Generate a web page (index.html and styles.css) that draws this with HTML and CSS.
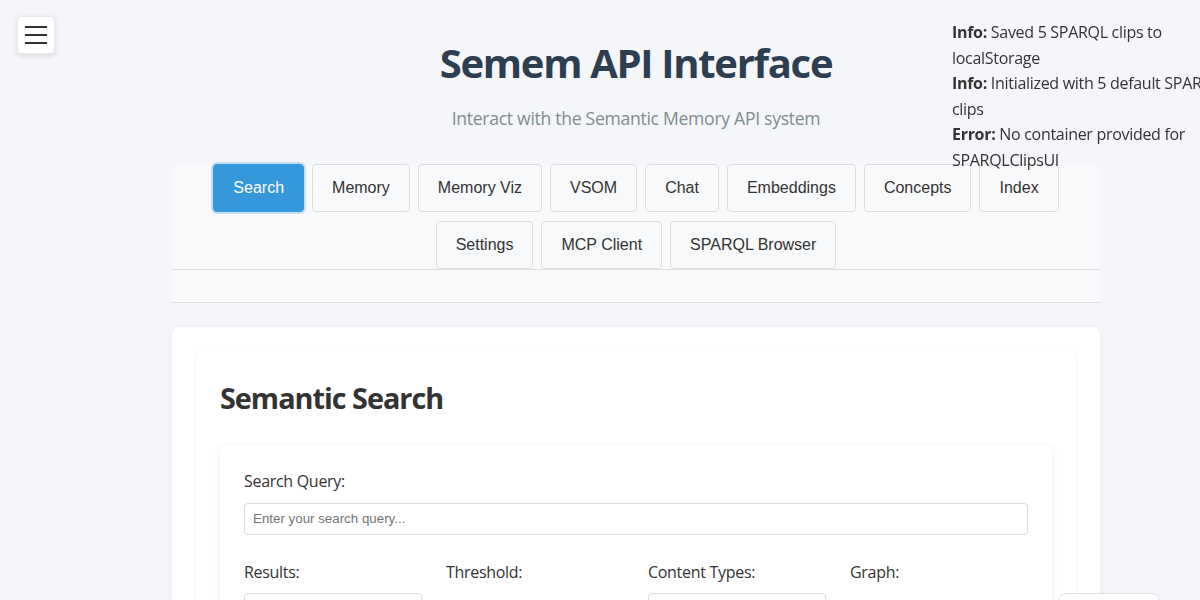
FILE: index.html
```html
<!DOCTYPE html>
<html lang="en">
<head>
<meta charset="utf-8">
<title>Semem API Interface</title>
<link rel="stylesheet" href="styles.css">
</head>
<body>
<button class="menu-toggle" aria-label="Menu">
  <span class="bar"></span><span class="bar"></span><span class="bar"></span>
</button>

<div class="log">
  <div><strong>Info:</strong> Saved 5 SPARQL clips to localStorage</div>
  <div><strong>Info:</strong> Initialized with 5 default SPARQL clips</div>
  <div><strong>Error:</strong> No container provided for SPARQLClipsUI</div>
</div>

<main class="main">
  <div class="container">
    <header class="header">
      <h1 class="title">Semem API Interface</h1>
      <p class="subtitle">Interact with the Semantic Memory API system</p>
    </header>

    <nav class="tabs">
      <button class="tab active">Search</button>
      <button class="tab">Memory</button>
      <button class="tab">Memory Viz</button>
      <button class="tab">VSOM</button>
      <button class="tab">Chat</button>
      <button class="tab">Embeddings</button>
      <button class="tab">Concepts</button>
      <button class="tab">Index</button>
      <button class="tab">Settings</button>
      <button class="tab">MCP Client</button>
      <button class="tab">SPARQL Browser</button>
    </nav>
    <div class="subtabs"></div>

    <section class="card">
      <div class="panel">
        <h2 class="panel-title">Semantic Search</h2>
        <form class="form-card">
          <div class="field">
            <label class="label">Search Query:</label>
            <input class="input" type="text" placeholder="Enter your search query...">
          </div>
          <div class="form-row">
            <div class="field">
              <label class="label">Results:</label>
              <div class="select-box"></div>
            </div>
            <div class="field">
              <label class="label">Threshold:</label>
            </div>
            <div class="field">
              <label class="label">Content Types:</label>
              <div class="select-box"></div>
            </div>
            <div class="field">
              <label class="label">Graph:</label>
            </div>
          </div>
        </form>
      </div>
    </section>
  </div>
</main>

<div class="float-box"></div>
</body>
</html>
```

FILE: styles.css
```css
* { box-sizing: border-box; }

html, body {
  margin: 0;
  height: 100%;
  overflow: hidden;
}

body {
  background: #f5f6fa;
  font-family: "Open Sans", "Noto Sans", sans-serif;
  font-size: 16px;
  line-height: 1.6;
  color: #333;
  letter-spacing: -0.3px;
}

.menu-toggle {
  position: fixed;
  top: 16px;
  left: 17px;
  width: 38px;
  height: 38px;
  padding: 0;
  border: 1px solid #e8e8e8;
  border-radius: 4px;
  background: #fff;
  box-shadow: 0 2px 6px rgba(0,0,0,0.12);
  display: flex;
  flex-direction: column;
  align-items: center;
  justify-content: center;
  gap: 6px;
}
.menu-toggle .bar {
  display: block;
  width: 22px;
  height: 2px;
  background: #333;
}

.log {
  position: fixed;
  top: 20px;
  left: 952px;
  width: 300px;
  font-size: 16px;
  line-height: 25.5px;
  color: #333;
}

.main {
  margin-left: 72px;
}

.container {
  max-width: 928px;
  margin: 0 auto;
}

.header {
  text-align: center;
  padding-top: 39px;
  padding-bottom: 34px;
}
.title {
  margin: 0;
  font-size: 40px;
  line-height: 48px;
  font-weight: 700;
  color: #2c3e50;
  letter-spacing: -1.3px;
}
.subtitle {
  margin: 19px 0 0;
  font-size: 17.6px;
  line-height: 24px;
  color: #7f8c8d;
}

.tabs {
  display: flex;
  flex-wrap: wrap;
  justify-content: center;
  gap: 9px 8px;
  padding: 0 40px;
  background: #f8f9fa;
  border-bottom: 1px solid #ddd;
  letter-spacing: 0;
}
.tab {
  font-family: "Liberation Sans", Arial, sans-serif;
  font-size: 16px;
  line-height: 18px;
  padding: 14px 19px;
  border: 1px solid #ddd;
  border-radius: 4px;
  background: #f8f9fa;
  color: #333;
  cursor: pointer;
}
.tab.active {
  background: #3498db;
  border-color: #3498db;
  color: #fff;
  box-shadow: 0 0 0 2px #c5def5;
}

.subtabs {
  height: 33px;
  background: #f8f9fa;
  border-bottom: 1px solid #ddd;
}

.card {
  margin-top: 24px;
  background: #fff;
  border-radius: 8px;
  box-shadow: 0 2px 10px rgba(0,0,0,0.06);
  padding: 23px 24px;
}

.panel {
  background: #fff;
  border-radius: 8px;
  box-shadow: 0 1px 4px rgba(0,0,0,0.05);
  padding: 25px 24px 24px;
}
.panel-title {
  margin: 0 0 24px;
  font-size: 28.8px;
  line-height: 46px;
  font-weight: 700;
  color: #333;
  letter-spacing: -1px;
}

.form-card {
  background: #fff;
  border-radius: 8px;
  box-shadow: 0 1px 6px rgba(0,0,0,0.07);
  padding: 24px;
}

.field {
  display: flex;
  flex-direction: column;
}
.label {
  font-size: 16px;
  line-height: 25.6px;
  margin-bottom: 8px;
  color: #333;
}
.input {
  height: 32px;
  padding: 0 8px;
  border: 1px solid #ddd;
  border-radius: 4px;
  font-family: "Liberation Sans", Arial, sans-serif;
  font-size: 13.33px;
  letter-spacing: 0;
  color: #333;
  background: #fff;
}
.input::placeholder { color: #757575; }

.form-row {
  display: grid;
  grid-template-columns: repeat(4, 1fr);
  gap: 24px;
  margin-top: 25px;
}
.select-box {
  height: 34px;
  border: 1px solid #ddd;
  border-radius: 4px;
  background: #fff;
}

.float-box {
  position: fixed;
  left: 1058px;
  top: 593px;
  width: 102px;
  height: 40px;
  background: #fff;
  border: 1px solid #dde3e8;
  border-radius: 8px;
}
```
